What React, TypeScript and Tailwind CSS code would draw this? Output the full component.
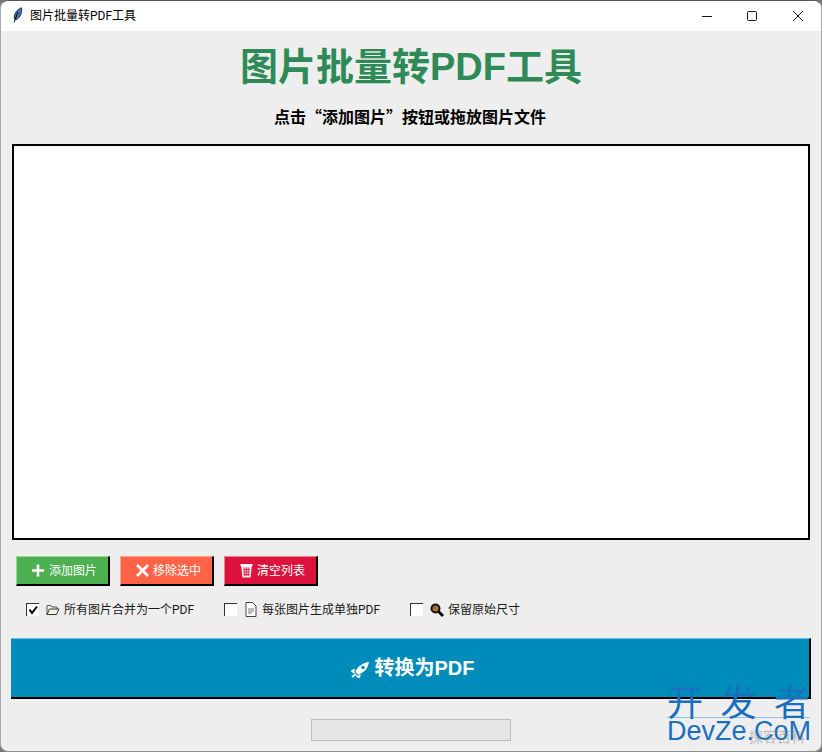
import React from "react";

const sans = "font-['Roboto','Noto_Sans_CJK_SC',sans-serif]";

function Btn({ bg, light, icon, label }: { bg: string; light: string; icon: React.ReactNode; label: string }) {
  return (
    <div
      className={`w-[94px] h-[30px] flex items-center justify-start pl-[15px] gap-[4px] border-t border-l border-r-2 border-b-2 border-r-black border-b-black text-white text-[12px] ${bg} ${light}`}
    >
      {icon}
      <span className="mt-[1px]">{label}</span>
    </div>
  );
}

function Check({ checked, icon, label }: { checked?: boolean; icon: React.ReactNode; label: string }) {
  return (
    <div className="flex items-center text-[12px] text-[#1a1a1a]">
      <div className="w-[13px] h-[13px] bg-white border-t border-l border-t-[#333] border-l-[#333] flex items-center justify-center">
        {checked && (
          <svg width="11" height="11" viewBox="0 0 11 11">
            <path d="M1.5 4.5L4 8L9 1.5" fill="none" stroke="#000" strokeWidth="2" />
          </svg>
        )}
      </div>
      <div className="w-[14px] ml-[7px] mr-[4px] flex justify-center">{icon}</div>
      <span>{label}</span>
    </div>
  );
}

export default function App() {
  return (
    <div className={`relative w-[822px] h-[752px] overflow-hidden bg-[#777] ${sans}`}>
      <div className="w-[822px] h-[752px] rounded-[8px] border border-t-[#555] border-l-[#a8a8a8] border-r-[#a8a8a8] border-b-[#8f8f8f] bg-[#eeeeee] flex flex-col overflow-hidden">
        {/* title bar */}
        <div className="h-[30px] shrink-0 bg-white flex items-center pl-[11px] text-[12px] text-black">
          <svg className="-mt-[2px]" width="11" height="16" viewBox="0 0 11 16">
            <path d="M2.5 12C1.5 8 4 3 9.5 .8C10.3 5 8.5 10.5 4.5 12.5Z" fill="#3f74ba" stroke="#10233f" strokeWidth="0.9" />
            <path d="M2 15.5L6 5" stroke="#000" strokeWidth="1" />
          </svg>
          <span className="ml-[7px]">图片批量转PDF工具</span>
          <div className="ml-auto flex items-center text-[#111]">
            <svg width="46" height="30" viewBox="0 0 46 30">
              <path d="M19 15.5H29" stroke="#111" strokeWidth="1" />
            </svg>
            <svg width="46" height="30" viewBox="0 0 46 30">
              <rect x="18.5" y="10.5" width="9" height="9" rx="1.2" fill="none" stroke="#111" strokeWidth="1" />
            </svg>
            <svg width="46" height="30" viewBox="0 0 46 30">
              <path d="M18 10L28 20M28 10L18 20" stroke="#111" strokeWidth="1" />
            </svg>
          </div>
        </div>

        {/* heading */}
        <div className="mt-[11px] h-[50px] text-center text-[38px] leading-[50px] font-bold text-[#2e8b57] font-['Liberation_Sans','Noto_Sans_CJK_SC',sans-serif]">
          图片批量转PDF工具
        </div>
        <div className="mt-[13px] mb-[1px] pr-[2px] h-[22px] text-center text-[16px] leading-[22px] font-bold text-black font-['Noto_Sans_CJK_SC',sans-serif]">
          点击“添加图片”按钮或拖放图片文件
        </div>

        {/* list */}
        <div className="mt-[16px] ml-[11px] w-[798px] h-[396px] shrink-0 bg-white border-2 border-black" />

        {/* buttons */}
        <div className="mt-[16px] ml-[15px] flex gap-[10px]">
          <Btn
            bg="bg-[#4caf50]"
            light="border-t-[#8fdc92] border-l-[#8fdc92]"
            label="添加图片"
            icon={
              <svg width="13" height="13" viewBox="0 0 13 13">
                <path d="M6 .5V12.5M0 6.5H12" stroke="#fff" strokeWidth="2.6" />
              </svg>
            }
          />
          <Btn
            bg="bg-[#ff6347]"
            light="border-t-[#ffa393] border-l-[#ffa393]"
            label="移除选中"
            icon={
              <svg width="13" height="13" viewBox="0 0 13 13">
                <path d="M1 1L12 12M12 1L1 12" stroke="#fff" strokeWidth="2.8" />
              </svg>
            }
          />
          <Btn
            bg="bg-[#dc143c]"
            light="border-t-[#ee7f94] border-l-[#ee7f94]"
            label="清空列表"
            icon={
              <svg width="13" height="15" viewBox="0 0 13 15">
                <path d="M.5 2H12.5" stroke="#fff" strokeWidth="1.8" />
                <path d="M1.8 3.5L3 14H10L11.2 3.5Z" fill="#f7c6d0" stroke="#fff" strokeWidth="1.1" />
                <path d="M4.7 4.5V13M6.5 4.5V13M8.3 4.5V13M3 6.5H10M3 9H10M3.4 11.5H9.6" stroke="#dc143c" strokeWidth="0.7" />
              </svg>
            }
          />
        </div>

        {/* checks */}
        <div className="mt-[16px] h-[15px] ml-[25px] flex items-center">
          <div className="w-[198px]">
            <Check
              checked
              label="所有图片合并为一个PDF"
              icon={
                <svg width="14" height="13" viewBox="0 0 14 13">
                  <path d="M1 11.5V2.5H5L6 4H11V6" fill="none" stroke="#555" strokeWidth="1" />
                  <path d="M1 11.5L3.5 6H13L10.5 11.5Z" fill="#f3f0e6" stroke="#333" strokeWidth="1" />
                </svg>
              }
            />
          </div>
          <div className="w-[186px]">
            <Check
              label="每张图片生成单独PDF"
              icon={
                <svg width="12" height="15" viewBox="0 0 12 15">
                  <path d="M1 .5H7.5L11 4V14.5H1Z" fill="#fff" stroke="#444" strokeWidth="1" />
                  <path d="M3 7H9M3 9H9M3 11H7" stroke="#777" strokeWidth="1.2" />
                </svg>
              }
            />
          </div>
          <Check
            label="保留原始尺寸"
            icon={
              <svg width="14" height="14" viewBox="0 0 14 14">
                <circle cx="5.5" cy="5.5" r="4" fill="#b5762a" stroke="#111" strokeWidth="2" />
                <circle cx="4.5" cy="4.5" r="1.2" fill="#3a6ea8" />
                <path d="M8.5 8.5L13 13" stroke="#000" strokeWidth="2.8" />
              </svg>
            }
          />
        </div>

        {/* convert */}
        <div className="mt-[21px] ml-[10px] w-[800px] h-[61px] shrink-0 bg-[#008cba] border-t border-t-[#6bbfe8] border-b-2 border-b-black border-r-2 border-r-black flex items-center justify-center gap-[5px] pl-[5px] text-white text-[20px] font-bold font-['Liberation_Sans','Noto_Sans_CJK_SC',sans-serif]">
          <svg className="mt-[3px]" width="19" height="17" viewBox="0 0 19 17">
            <path d="M4.5 11C5.5 6.5 11 2 18 1C17 7.5 12.5 12 7.5 13.5Z" fill="#fff" />
            <circle cx="12" cy="6.5" r="1.7" fill="#008cba" />
            <path d="M1 16L5 13M4 8.5L1 10L3.5 12M9 13.5L8 16.5L5.5 14.5" stroke="#fff" strokeWidth="1.8" fill="none" />
          </svg>
          <span>转换为PDF</span>
        </div>

        {/* progress */}
        <div className="mt-[20px] ml-[310px] w-[200px] h-[22px] shrink-0 bg-[#e6e6e6] border border-[#bcbcbc]" />
      </div>

      {/* watermark overlay */}
      <div className="absolute left-[667px] top-[684px] w-[143px] text-[#1a6fbe]">
        <div className="flex justify-between text-[36px] leading-[33px] font-['Noto_Sans_CJK_SC',sans-serif]">
          <span>开</span>
          <span>发</span>
          <span>者</span>
        </div>
        <div className="border-t border-[#8fc4ea] text-[27px] leading-[26px] font-['Liberation_Sans',sans-serif] whitespace-nowrap">
          DevZe.CoM
        </div>
        <div className="absolute right-[5px] top-[43px] text-[14px] leading-[18px] text-[#8a8a8a] opacity-50 whitespace-nowrap font-['Noto_Sans_CJK_SC',sans-serif]">
          探客百科
        </div>
      </div>
    </div>
  );
}
